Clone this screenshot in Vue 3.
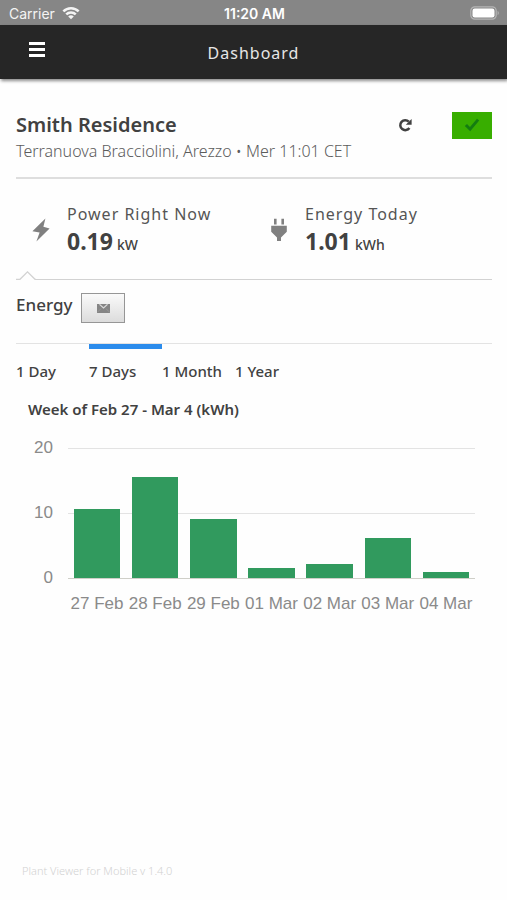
<template>
  <div class="app">
    <!-- Status bar -->
    <div class="status-bar">
      <div class="carrier">
        <span>Carrier</span>
        <svg width="18" height="14" viewBox="0 0 20 14" fill="none" stroke="currentColor" stroke-width="2.8">
          <path d="M1.5 5.2a12 12 0 0 1 17 0"/>
          <path d="M4.7 8.6a7.5 7.5 0 0 1 10.6 0"/>
          <path d="M10 14L6.9 10.9a4.4 4.4 0 0 1 6.2 0z" fill="currentColor" stroke="none"/>
        </svg>
      </div>
      <div class="clock">11:20 AM</div>
      <div class="battery">
        <svg width="30" height="14" viewBox="0 0 30 14">
          <rect x="0.8" y="0.8" width="25.4" height="12.4" rx="4" fill="none" stroke="#b5b5b5" stroke-width="1.2"/>
          <rect x="2.5" y="2.5" width="22" height="9" rx="2.2" fill="#fff"/>
          <path d="M27.6 4.8a2.6 2.6 0 0 1 0 4.4z" fill="#b5b5b5"/>
        </svg>
      </div>
    </div>

    <!-- Header -->
    <header class="header">
      <button class="menu-btn" aria-label="Menu">
        <svg width="16" height="16" viewBox="0 0 16 16" fill="currentColor">
          <path d="M0 0h16v3H0zM0 6h16v3H0zM0 12h16v3H0z"/>
        </svg>
      </button>
      <h1>Dashboard</h1>
    </header>

    <main class="content">
      <!-- Plant -->
      <section class="plant">
        <div class="plant-top">
          <h2>Smith Residence</h2>
          <button class="refresh-btn" aria-label="Refresh">
            <svg width="14" height="14" viewBox="0 0 14 14">
              <path d="M11.4 10A5 5 0 1 1 10.8 3.6" fill="none" stroke="currentColor" stroke-width="2.5"/>
              <path d="M13.6 1v5.8H7.8z" fill="currentColor"/>
            </svg>
          </button>
          <button class="status-btn" aria-label="Plant status OK">
            <svg width="16" height="14" viewBox="0 0 16 14" fill="currentColor">
              <path d="M0.8 8L3 6L6 9L13 0.8L15.2 2.4L6.2 13.2z"/>
            </svg>
          </button>
        </div>
        <p>Terranuova Bracciolini, Arezzo • Mer 11:01 CET</p>
      </section>

      <!-- Current values -->
      <section class="stats">
        <div v-for="stat in stats" :key="stat.label" class="stat">
          <svg v-if="stat.icon === 'bolt'" width="18" height="24" viewBox="0 0 18 24" fill="currentColor">
            <path d="M13.4 0.4L0.4 13.2L7.6 14.6L4.4 23.6L17.6 10.4L11.4 8.8z"/>
          </svg>
          <svg v-else width="18" height="24" viewBox="0 0 18 24" fill="currentColor">
            <path d="M4 0.8h2.6V6.6H4zM11.4 0.8H14V6.6h-2.6zM1.2 7.8h15.6v6L11 19.6V23H7v-3.4L1.2 13.8z"/>
          </svg>
          <div class="stat-text">
            <div class="stat-label">{{ stat.label }}</div>
            <div class="stat-value">
              <strong>{{ stat.value }}</strong>
              <span>{{ stat.unit }}</span>
            </div>
          </div>
        </div>
      </section>

      <div class="notch-line">
        <svg width="20" height="9" viewBox="0 0 20 9" fill="none" stroke="#d2d2d2" stroke-width="1.3">
          <path d="M0 8.3H4L11.5 0.9L19 8.3H20"/>
        </svg>
        <span></span>
      </div>

      <!-- Energy -->
      <section class="energy">
        <div class="energy-top">
          <h3>Energy</h3>
          <button class="mail-btn" aria-label="Send by email">
            <svg width="13" height="9" viewBox="0 0 13 9">
              <rect width="13" height="9" fill="#858585"/>
              <path d="M2.5 0.4L6.5 4L10.5 0.4" fill="none" stroke="#dcdcdc" stroke-width="1.2"/>
              <path d="M0 8.6L4 4.6M13 8.6L9 4.6" stroke="#a5a5a5" stroke-width="0.6"/>
            </svg>
          </button>
        </div>

        <nav class="tabs">
          <button
            v-for="range in ranges"
            :key="range"
            :class="{ active: activeRange === range }"
            @click="activeRange = range"
          >{{ range }}</button>
        </nav>

        <h4>Week of Feb 27 - Mar 4 (kWh)</h4>

        <div class="chart">
          <div class="axis">
            <span>20</span>
            <span>10</span>
            <span>0</span>
          </div>
          <div class="plot">
            <div class="bars">
              <div v-for="day in days" :key="day.date" class="slot">
                <div class="bar" :style="{ height: (day.kwh / 20) * 100 + '%' }"></div>
              </div>
            </div>
            <div class="dates">
              <span v-for="day in days" :key="day.date">{{ day.date }}</span>
            </div>
          </div>
        </div>
      </section>
    </main>

    <footer class="footer">Plant Viewer for Mobile v 1.4.0</footer>
  </div>
</template>

<script setup>
import { ref } from 'vue';

const stats = [
  { icon: 'bolt', label: 'Power Right Now', value: '0.19', unit: 'kW' },
  { icon: 'plug', label: 'Energy Today', value: '1.01', unit: 'kWh' }
];

const ranges = ['1 Day', '7 Days', '1 Month', '1 Year'];
const activeRange = ref('7 Days');

const days = [
  { date: '27 Feb', kwh: 10.6 },
  { date: '28 Feb', kwh: 15.5 },
  { date: '29 Feb', kwh: 9.1 },
  { date: '01 Mar', kwh: 1.5 },
  { date: '02 Mar', kwh: 2.1 },
  { date: '03 Mar', kwh: 6.1 },
  { date: '04 Mar', kwh: 1 }
];
</script>

<style>
body {
  margin: 0;
  background: #fefefe;
}
</style>

<style scoped>
.app {
  display: flex;
  flex-direction: column;
  min-height: 100vh;
  font-family: "Noto Sans", sans-serif;
  color: #414141;
}

h1,
h2,
h3,
h4,
p {
  margin: 0;
}

button {
  padding: 0;
  border: none;
  background: none;
  font: inherit;
  color: inherit;
  cursor: pointer;
}

svg {
  display: block;
}

/* Status bar */
.status-bar {
  display: grid;
  grid-template-columns: 1fr auto 1fr;
  align-items: center;
  height: 25px;
  padding: 1px 7px 0 9px;
  box-sizing: border-box;
  background: #868686;
  color: #fff;
  font-family: Inter, sans-serif;
  font-size: 14px;
}

.carrier {
  display: flex;
  align-items: center;
  gap: 7px;
  color: #f4f4f4;
}

.clock {
  font-weight: 600;
}

.battery {
  justify-self: end;
}

/* Header */
.header {
  display: grid;
  grid-template-columns: 1fr auto 1fr;
  height: 54px;
  padding: 0 29px;
  background: #262626;
  color: #fff;
  box-shadow: 1px 2px 3px rgba(0, 0, 0, 0.45);
}

.menu-btn {
  width: 16px;
  height: 16px;
  margin-top: 17px;
}

.header h1 {
  font-size: 16px;
  font-weight: 400;
  line-height: 24px;
  padding-top: 16px;
  letter-spacing: 1px;
  color: #e6e6e6;
}

.content {
  flex: 1;
  padding: 31px 15px 0 16px;
}

/* Plant */
.plant {
  padding-bottom: 15px;
  border-bottom: 2px solid #dedede;
}

.plant-top {
  display: flex;
  align-items: center;
  height: 30px;
}

.plant-top h2 {
  flex: 1;
  font-size: 20px;
  font-weight: 600;
  line-height: 30px;
}

.refresh-btn {
  margin-right: 40px;
}

.status-btn {
  display: flex;
  align-items: center;
  justify-content: center;
  width: 40px;
  height: 27px;
  background: #38ae00;
  color: #147d10;
}

.plant p {
  font-size: 16px;
  font-weight: 300;
  line-height: 22px;
  color: #5c5c5c;
}

/* Current values */
.stats {
  display: grid;
  grid-template-columns: 1fr 1fr;
  padding: 24px 0 10px;
}

.stat {
  display: flex;
  align-items: center;
  gap: 17px;
  padding-left: 16px;
  color: #808080;
}

.stat svg {
  margin-bottom: 4px;
}

.stat-label {
  font-size: 16px;
  line-height: 22px;
  letter-spacing: 1px;
  color: #555;
}

.stat-value {
  display: flex;
  align-items: baseline;
  gap: 4px;
  line-height: 32px;
  color: #414141;
}

.stat-value strong {
  font-size: 23px;
  font-weight: 700;
}

.stat-value span {
  font-size: 14px;
  font-weight: 500;
}

.notch-line {
  display: flex;
  align-items: flex-end;
}

.notch-line span {
  flex: 1;
  height: 1px;
  background: #d2d2d2;
}

/* Energy */
.energy-top {
  display: flex;
  gap: 9px;
  padding: 13px 0 20px;
}

.energy-top h3 {
  font-size: 17px;
  font-weight: 500;
  line-height: 24px;
}

.mail-btn {
  display: flex;
  align-items: center;
  justify-content: center;
  width: 44px;
  height: 30px;
  box-sizing: border-box;
  border: 1px solid #969696;
  background: linear-gradient(#fafafa, #dcdcdc);
}

.tabs {
  display: flex;
  border-top: 1px solid #e3e3e3;
}

.tabs button {
  width: 73px;
  border-top: 5px solid transparent;
  padding: 11px 0;
  font-size: 15px;
  font-weight: 500;
  line-height: 22px;
  text-align: left;
  white-space: nowrap;
}

.tabs button.active {
  border-top-color: #2c8cec;
}

.energy h4 {
  padding: 5px 0 0 12px;
  font-size: 15px;
  font-weight: 600;
  line-height: 22px;
}

/* Chart */
.chart {
  display: flex;
  gap: 15px;
  margin-top: 28px;
  padding-right: 17px;
  font-family: "Liberation Sans", Arial, sans-serif;
  font-size: 17px;
  line-height: 20px;
  color: #8a8a8a;
}

.axis {
  display: flex;
  flex-direction: column;
  justify-content: space-between;
  width: 37px;
  height: 150px;
  margin-top: -10px;
  text-align: right;
}

.plot {
  flex: 1;
}

.bars {
  display: flex;
  height: 130px;
  border-bottom: 1px solid #cfcfc8;
  background: linear-gradient(#e3e3e3 1px, transparent 1px) 0 0 / 100% 50%;
}

.slot {
  flex: 1;
  display: flex;
  align-items: flex-end;
  justify-content: center;
}

.bar {
  width: 80%;
  background: #319a5e;
}

.dates {
  display: flex;
  margin-top: 15px;
}

.dates span {
  flex: 1;
  text-align: center;
  white-space: nowrap;
}

.footer {
  padding: 0 22px 20px;
  font-size: 11px;
  font-weight: 300;
  line-height: 18px;
  color: #d2d2d2;
}
</style>
